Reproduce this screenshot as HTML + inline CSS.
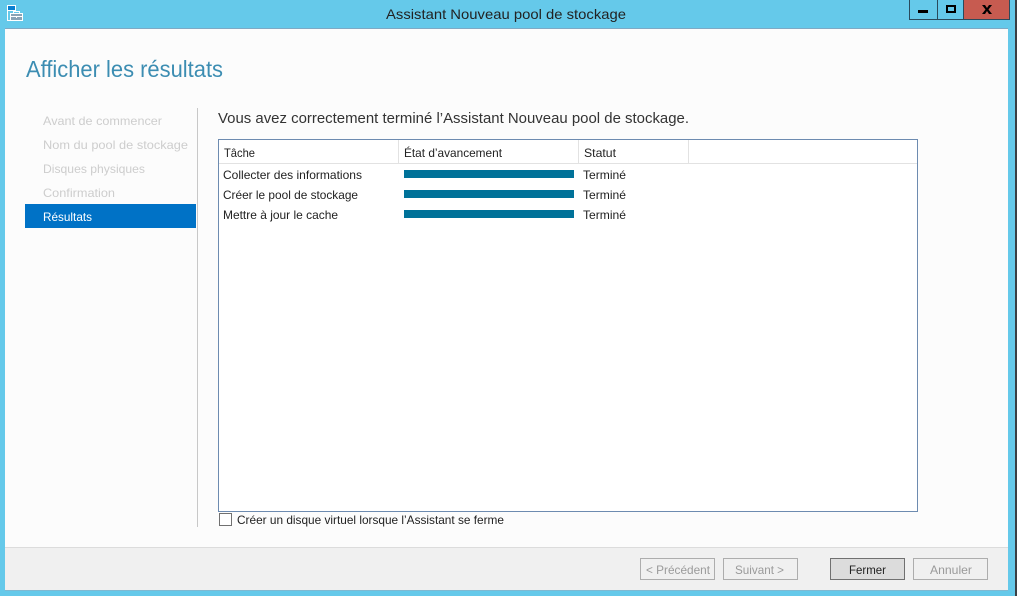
<!DOCTYPE html>
<html lang="fr">
<head>
<meta charset="utf-8">
<title>Assistant Nouveau pool de stockage</title>
<style>
html,body{margin:0;padding:0;width:1017px;height:596px;overflow:hidden;background:#65c9ea}
svg{display:block;position:absolute;left:0;top:0}
text{font-family:"Liberation Sans",sans-serif;font-size:12px;fill:#222}
.s{fill:#cdcdcd}
.b{fill:#9a9a9a}
</style>
</head>
<body>
<svg width="1017" height="596" viewBox="0 0 1017 596" xmlns="http://www.w3.org/2000/svg" shape-rendering="crispEdges">
<rect width="1017" height="596" fill="#65c9ea"/>
<rect x="1015" y="0" width="2" height="596" fill="#3a3f44"/>
<rect x="5" y="28" width="1003" height="1" fill="#7fa9c4"/>
<rect x="5" y="29" width="1003" height="518" fill="#fcfcfc"/>
<rect x="5" y="547" width="1003" height="1" fill="#dcdcdc"/>
<rect x="5" y="548" width="1003" height="42" fill="#f0f0f0"/>
<rect x="5" y="590" width="1003" height="1" fill="#7fb9d2"/>

<!-- app icon -->
<rect x="7" y="5" width="9" height="16" fill="#fff"/>
<rect x="8" y="6" width="7" height="4" fill="#0a7fd0"/>
<rect x="8" y="11" width="7" height="9" fill="#65c9ea"/>
<rect x="10" y="13" width="13" height="8" fill="#fff"/>
<rect x="11" y="14" width="11" height="2" fill="#8aa3b5"/>
<rect x="11" y="17" width="11" height="3" fill="#8aa3b5"/>
<rect x="13" y="11" width="7" height="2" fill="#fff"/>
<rect x="14" y="12" width="5" height="1" fill="#65c9ea"/>
<rect x="16" y="16" width="1" height="2" fill="#fff"/>

<!-- title bar -->
<text x="386" y="19" style="font-size:14px" textLength="240" lengthAdjust="spacingAndGlyphs">Assistant Nouveau pool de stockage</text>

<!-- window buttons -->
<rect x="963" y="0" width="47" height="19" fill="#c75b50"/>
<rect x="909" y="0" width="1" height="20" fill="#2a4a5c"/>
<rect x="937" y="0" width="1" height="20" fill="#2a4a5c"/>
<rect x="963" y="0" width="1" height="20" fill="#2a4a5c"/>
<rect x="1009" y="0" width="1" height="20" fill="#2a4a5c"/>
<rect x="909" y="19" width="101" height="1" fill="#2a4a5c"/>
<rect x="918" y="10" width="10" height="3" fill="#000"/>
<rect x="947" y="6" width="8" height="6" fill="none" stroke="#000" stroke-width="2"/>
<path d="M982 5h3l2 3 2-3h3l-3.500 4.500 3.500 4.500h-3l-2-3-2 3h-3l3.500-4.500z" fill="#000" shape-rendering="auto"/>

<!-- heading -->
<text x="26" y="77" style="font-size:23px;fill:#3c8db2" textLength="197" lengthAdjust="spacingAndGlyphs">Afficher les résultats</text>

<!-- sidebar -->
<text class="s" x="43" y="125" textLength="119" lengthAdjust="spacingAndGlyphs">Avant de commencer</text>
<text class="s" x="43" y="149" textLength="145" lengthAdjust="spacingAndGlyphs">Nom du pool de stockage</text>
<text class="s" x="43" y="173" textLength="102" lengthAdjust="spacingAndGlyphs">Disques physiques</text>
<text class="s" x="43" y="197" textLength="72" lengthAdjust="spacingAndGlyphs">Confirmation</text>
<rect x="25" y="204" width="171" height="24" fill="#0072c6"/>
<text x="43" y="221" style="fill:#fff" textLength="49" lengthAdjust="spacingAndGlyphs">Résultats</text>
<rect x="197" y="108" width="1" height="419" fill="#c8c8c8"/>

<!-- main heading -->
<text x="218" y="123" style="font-size:15px;fill:#333" textLength="471" lengthAdjust="spacingAndGlyphs">Vous avez correctement terminé l’Assistant Nouveau pool de stockage.</text>

<!-- table -->
<rect x="218.500" y="139.500" width="699" height="372" fill="#fff" stroke="#6d8bb0" stroke-width="1"/>
<rect x="219" y="163" width="698" height="1" fill="#e2e2e2"/>
<rect x="398" y="140" width="1" height="23" fill="#e2e2e2"/>
<rect x="578" y="140" width="1" height="23" fill="#e2e2e2"/>
<rect x="688" y="140" width="1" height="23" fill="#e2e2e2"/>
<text x="224" y="157" textLength="31" lengthAdjust="spacingAndGlyphs">Tâche</text>
<text x="404" y="157" textLength="98" lengthAdjust="spacingAndGlyphs">État d’avancement</text>
<text x="584" y="157" textLength="32" lengthAdjust="spacingAndGlyphs">Statut</text>

<text x="223" y="179" textLength="139" lengthAdjust="spacingAndGlyphs">Collecter des informations</text>
<rect x="404" y="170" width="170" height="8" fill="#007299"/>
<text x="583" y="179" textLength="43" lengthAdjust="spacingAndGlyphs">Terminé</text>

<text x="223" y="199" textLength="135" lengthAdjust="spacingAndGlyphs">Créer le pool de stockage</text>
<rect x="404" y="190" width="170" height="8" fill="#007299"/>
<text x="583" y="199" textLength="43" lengthAdjust="spacingAndGlyphs">Terminé</text>

<text x="223" y="219" textLength="115" lengthAdjust="spacingAndGlyphs">Mettre à jour le cache</text>
<rect x="404" y="210" width="170" height="8" fill="#007299"/>
<text x="583" y="219" textLength="43" lengthAdjust="spacingAndGlyphs">Terminé</text>

<!-- checkbox -->
<rect x="219.500" y="513.500" width="12" height="12" fill="#fff" stroke="#707070" stroke-width="1"/>
<text x="237" y="524" textLength="267" lengthAdjust="spacingAndGlyphs">Créer un disque virtuel lorsque l’Assistant se ferme</text>

<!-- buttons -->
<rect x="640.500" y="558.500" width="74" height="21" fill="#f0f0f0" stroke="#adadad"/>
<text class="b" x="646" y="574" textLength="64" lengthAdjust="spacingAndGlyphs">&lt; Précédent</text>
<rect x="723.500" y="558.500" width="74" height="21" fill="#f0f0f0" stroke="#adadad"/>
<text class="b" x="735" y="574" textLength="49" lengthAdjust="spacingAndGlyphs">Suivant &gt;</text>
<rect x="830.500" y="558.500" width="74" height="21" fill="#dcdcdc" stroke="#707070"/>
<text x="849" y="574" textLength="37" lengthAdjust="spacingAndGlyphs">Fermer</text>
<rect x="913.500" y="558.500" width="74" height="21" fill="#f0f0f0" stroke="#adadad"/>
<text class="b" x="930" y="574" textLength="42" lengthAdjust="spacingAndGlyphs">Annuler</text>
</svg>
</body>
</html>
